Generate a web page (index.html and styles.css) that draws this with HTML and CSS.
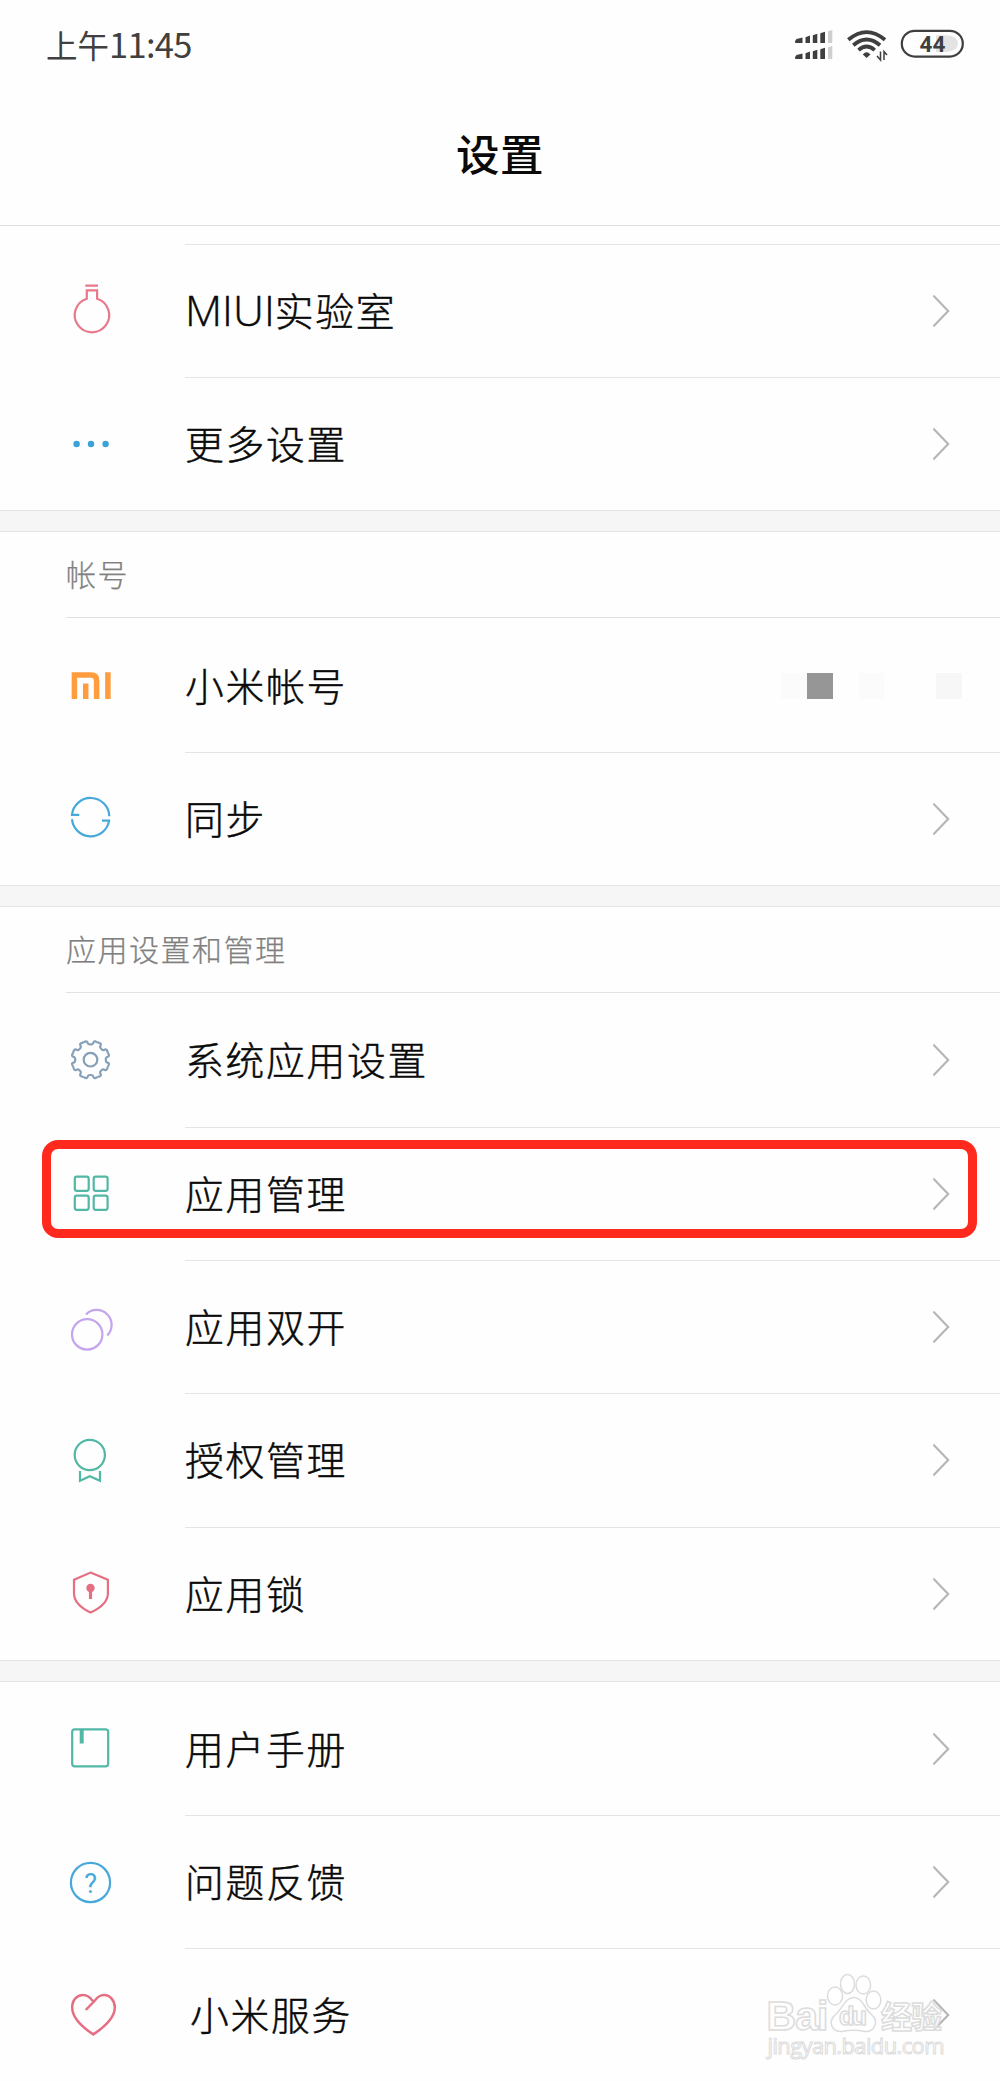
FILE: index.html
```html
<!DOCTYPE html>
<html lang="zh-CN">
<head>
<meta charset="utf-8">
<title>设置</title>
<link rel="stylesheet" href="styles.css">
</head>
<body>
<svg class="defs" aria-hidden="true">
  <symbol id="chevron" viewBox="0 0 18 34"><path d="M2 2.2 16.2 17 2 31.8" fill="none" stroke="#b5b5b5" stroke-width="2.1" stroke-linecap="round"/></symbol>
  <path id="cog" d="M-7.2-17.3-5-18.3Q-3.6-18.8-3-17.4L-2.7-16.5Q-2.1-15.3-.8-15.3H.8Q2.1-15.3 2.7-16.5L3-17.4Q3.6-18.8 5-18.3L7.2-17.3"/>
</svg>
<div class="screen">
  <div class="status">
    <div class="time">上午<span>11:45</span></div>
    <svg class="status-icons" width="180" height="38" viewBox="0 0 180 38">
      <g fill="#3f3f3f">
        <path d="M5 15.3 6.5 13 12.5 11.6V17H6Q5 17 5 16ZM15.5 11.3 20 9.6V17H15.5ZM22.8 9.2 27.3 7.7V17H22.8ZM30.3 7.2 35 5.8V17H30.3Z"/>
        <path d="M5 31.3 6.5 29 12.5 27.6V33H6Q5 33 5 32ZM15.5 27.3 20 25.6V33H15.5ZM22.8 25.2 27.3 23.7V33H22.8ZM30.3 23.2 35 21.8V33H30.3Z"/>
      </g>
      <path d="M38 5.2 42.3 4V17H38ZM38 21.2 42.3 20V33H38Z" fill="#cfcfcf"/>
      <g fill="none" stroke="#3f3f3f" stroke-width="3.8">
        <path d="M58.3 13.8Q76.6-1.6 95 13.8"/>
        <path d="M63.3 19.2Q76.6 7.8 90 19.2"/>
        <path d="M68.5 24.2Q76.6 17 84.7 24.2"/>
      </g>
      <path d="M76.6 32 72.8 28.4Q76.6 24 80.4 28.4Z" fill="#3f3f3f"/>
      <path d="M90.500 25.500V34L87 30M94 34V25.500L97 29" fill="none" stroke="#3f3f3f" stroke-width="1.500"/>
      <path d="M146 9.300H156Q168 10 168 17.500T156 26H146Z" fill="#e3e3e3"/>
      <rect x="111.800" y="4.800" width="61" height="25.800" rx="12.900" fill="none" stroke="#3f3f3f" stroke-width="2.200"/>
      <text x="142.500" y="26" class="battery">44</text>
    </svg>
  </div>
  <h1>设置</h1>

  <section class="group first">
    <div class="row">
      <svg class="icon" viewBox="0 0 64 64" stroke="#e8788a"><path d="M25.300 7.600H38M26.800 20.700V12.300H37.100V20.700A17.200 17.200 0 1 1 26.800 20.700Z"/></svg>
      <div class="body"><span class="label"><span class="latin">MIUI</span>实验室</span><svg class="arrow"><use href="#chevron"/></svg></div>
    </div>
    <div class="row">
      <svg class="icon" viewBox="0 0 64 64"><g fill="#3ba2d8"><circle cx="16.600" cy="32" r="3.200"/><circle cx="31" cy="32" r="3.200"/><circle cx="45.600" cy="32" r="3.200"/></g></svg>
      <div class="body"><span class="label">更多设置</span><svg class="arrow"><use href="#chevron"/></svg></div>
    </div>
  </section>
  <div class="gap"></div>

  <section class="group">
    <h2>帐号</h2>
    <div class="row">
      <svg class="icon" viewBox="0 0 64 64" stroke="#ff9c3e" style="stroke-width:5.500"><path d="M14.400 46V22H31Q36.600 22 36.600 27.500V46M25.700 46V30.500M47.900 46V19.300"/></svg>
      <div class="body"><span class="label">小米帐号</span><div class="mosaic"><i class="faint"></i><i class="dark"></i><i></i><i class="faint"></i><i></i><i></i><i class="light"></i></div></div>
    </div>
    <div class="row">
      <svg class="icon" viewBox="0 0 64 64" stroke="#47a8da"><path d="M19.300 28.800H12A18.700 18.700 0 0 1 49.300 30.200M42 34.600H49.100A18.700 18.700 0 0 1 12 33.200"/></svg>
      <div class="body"><span class="label">同步</span><svg class="arrow"><use href="#chevron"/></svg></div>
    </div>
  </section>
  <div class="gap"></div>

  <section class="group">
    <h2>应用设置和管理</h2>
    <div class="row">
      <svg class="icon" viewBox="0 0 64 64" stroke="#86a0b8"><g transform="translate(30.500 31.700)"><circle r="6.800"/><use href="#cog"/><use href="#cog" transform="rotate(45)"/><use href="#cog" transform="rotate(90)"/><use href="#cog" transform="rotate(135)"/><use href="#cog" transform="rotate(180)"/><use href="#cog" transform="rotate(225)"/><use href="#cog" transform="rotate(270)"/><use href="#cog" transform="rotate(315)"/></g></svg>
      <div class="body"><span class="label">系统应用设置</span><svg class="arrow"><use href="#chevron"/></svg></div>
    </div>
    <div class="row marked">
      <svg class="icon" viewBox="0 0 64 64" stroke="#52b7a4"><rect x="14.800" y="15.700" width="13.900" height="14.100" rx="2"/><rect x="33.700" y="15.700" width="13.900" height="14.100" rx="2"/><rect x="14.800" y="34.700" width="13.900" height="14.100" rx="2"/><rect x="33.700" y="34.700" width="13.900" height="14.100" rx="2"/></svg>
      <div class="body"><span class="label">应用管理</span><svg class="arrow"><use href="#chevron"/></svg></div>
    </div>
    <div class="row">
      <svg class="icon" viewBox="0 0 64 64" stroke="#c3a5ee"><circle cx="27.200" cy="39.400" r="15.200"/><path d="M26 19.400A14.900 14.900 0 0 1 47.300 40.400"/></svg>
      <div class="body"><span class="label">应用双开</span><svg class="arrow"><use href="#chevron"/></svg></div>
    </div>
    <div class="row">
      <svg class="icon" viewBox="0 0 64 64" stroke="#52b7a4"><circle cx="29.800" cy="27" r="15.100"/><path d="M20 43V52.800L29.800 48.300 40 52.800V43"/></svg>
      <div class="body"><span class="label">授权管理</span><svg class="arrow"><use href="#chevron"/></svg></div>
    </div>
    <div class="row">
      <svg class="icon" viewBox="0 0 64 64" stroke="#e56f82"><path d="M30.500 11.600 47.900 18.800V32.500Q47.900 43.500 30.500 51.600 14 43.500 14 32.500V18.800Z"/><circle cx="30.500" cy="27" r="4.200" fill="#e56f82" stroke="none"/><path d="M30.500 28V38" stroke-width="3.200"/></svg>
      <div class="body"><span class="label">应用锁</span><svg class="arrow"><use href="#chevron"/></svg></div>
    </div>
  </section>
  <div class="gap"></div>

  <section class="group">
    <div class="row plain">
      <svg class="icon" viewBox="0 0 64 64" stroke="#52b7a4"><rect x="12.200" y="13.300" width="36" height="37" rx="2.500"/><path d="M21.700 13V27.500" style="stroke-width:4"/></svg>
      <div class="body"><span class="label">用户手册</span><svg class="arrow"><use href="#chevron"/></svg></div>
    </div>
    <div class="row">
      <svg class="icon" viewBox="0 0 64 64" stroke="#47a8da"><circle cx="30.500" cy="32.500" r="19.600"/><text x="30.700" y="42.600" class="question">?</text></svg>
      <div class="body"><span class="label">问题反馈</span><svg class="arrow"><use href="#chevron"/></svg></div>
    </div>
    <div class="row service">
      <svg class="icon" viewBox="0 0 64 64" stroke="#e56f82" style="stroke-width:2.500"><path d="M25.700 27 34.500 18C38 13 41 12 44 12 50 12 54.800 17.500 54.800 24.500 54.800 34 46 43 33.300 51.400 20.500 43 12.200 34 12.200 24.500 12.200 17 17 12 23 12 27 12 30 14 32.800 18"/></svg>
      <div class="body"><span class="label">小米服务</span><svg class="arrow"><use href="#chevron"/></svg></div>
    </div>
  </section>

  <svg class="watermark" width="190" height="96" viewBox="0 0 190 96">
    <text class="bai" x="2.500" y="56" textLength="62">Bai</text>
    <ellipse cx="71" cy="22" rx="7.500" ry="9"/>
    <ellipse cx="83.500" cy="10" rx="7" ry="9.500"/>
    <ellipse cx="99.300" cy="11" rx="7.300" ry="9"/>
    <ellipse cx="109.500" cy="26" rx="7.300" ry="9"/>
    <path d="M90 23.500C98 23.500 100 34 107 40 116 48 110 58 101 57.500 94 56 85 56 78 57.500 68 58 63 48 72 40 79 34 81 23.500 90 23.500Z"/>
    <text class="du" x="75" y="51" textLength="28">du</text>
    <text class="jy" x="117" y="54" textLength="61">经验</text>
    <text class="url" x="3.500" y="79.500" textLength="177">jingyan.baidu.com</text>
  </svg>
</div>
</body>
</html>
```
FILE: styles.css
```css
*, *::after { box-sizing: border-box; }
body {
  margin: 0;
  background: #fefefe;
  color: #0a0a0a;
  font-family: "Noto Sans CJK SC", sans-serif;
}
.defs { position: absolute; width: 0; height: 0; }
.screen {
  position: relative;
  width: 1000px;
  height: 2081px;
  overflow: hidden;
}
.status {
  height: 90px;
  padding: 0 30px 0 46px;
  display: flex;
  justify-content: space-between;
  align-items: center;
}
.time {
  font-size: 31.500px;
  line-height: 44px;
  padding-bottom: 3px;
  color: #404040;
  font-weight: 400;
}
.time span { font-size: 34.500px; letter-spacing: -0.700px; }
.status-icons { display: block; }
.battery {
  font: 700 22.500px Roboto, sans-serif;
  text-anchor: middle;
  fill: #3f3f3f;
}
h1 {
  margin: 0;
  height: 136px;
  padding-top: 31px;
  border-bottom: 1px solid #dfdfdf;
  font-size: 43.500px;
  line-height: 64px;
  letter-spacing: 0.500px;
  font-weight: 500;
  text-align: center;
}
.first { padding-top: 17.600px; }
.row {
  position: relative;
  height: 133.330px;
  display: flex;
  align-items: center;
  padding-left: 60px;
}
.icon {
  width: 64px;
  height: 64px;
  flex: none;
  fill: none;
  stroke-width: 2.200px;
}
.body {
  flex: 1;
  height: 100%;
  margin-left: 61px;
  padding-right: 50px;
  display: flex;
  align-items: center;
  justify-content: space-between;
  border-top: 1px solid #e4e4e4;
}
h2 + .row .body, .plain .body { border-top-color: transparent; }
.label {
  font-size: 38.800px;
  line-height: 56px;
  padding-bottom: 4px;
  letter-spacing: 1.700px;
  font-weight: 300;
  -webkit-text-stroke: 0.450px currentColor;
}
.latin {
  font-family: "Open Sans", sans-serif;
  font-size: 43px;
  letter-spacing: 0;
  line-height: 1;
}
.service .label { padding-left: 5px; }
.arrow { width: 18px; height: 34px; flex: none; }
h2 {
  margin: 0 0 0 66px;
  height: 86.600px;
  border-bottom: 1px solid #e2e2e2;
  font-size: 30px;
  line-height: 83px;
  letter-spacing: 1.500px;
  font-weight: 300;
  color: #808080;
  -webkit-text-stroke: 0.250px currentColor;
}
.gap {
  height: 21.600px;
  background: #f6f6f6;
  border: 1px solid #e4e4e4;
  border-width: 1px 0;
}
.marked::after {
  content: "";
  position: absolute;
  left: 42px;
  top: 13px;
  width: 935px;
  height: 98px;
  border: 9px solid #ff2a1d;
  border-radius: 16px;
}
.mosaic { display: flex; margin-right: -12px; }
.mosaic i { width: 25.860px; height: 26px; }
.mosaic .faint { background: #fbfbfb; }
.mosaic .dark { background: #969696; }
.mosaic .light { background: #f7f7f7; }
.question {
  font: 400 27px Roboto, sans-serif;
  text-anchor: middle;
  fill: #47a8da;
  stroke: none;
}
.watermark {
  position: absolute;
  left: 764px;
  top: 1974px;
  overflow: visible;
  fill: rgba(255, 255, 255, .5);
  stroke: #dcdcdc;
  stroke-width: 1.500px;
}
.bai { font: 700 41px "Liberation Sans", sans-serif; }
.du { font: 700 25px "Liberation Sans", sans-serif; }
.jy { font: 700 31px "Noto Sans CJK SC", sans-serif; }
.url { font: 400 22px "Open Sans", sans-serif; stroke-width: 1px; }
```
